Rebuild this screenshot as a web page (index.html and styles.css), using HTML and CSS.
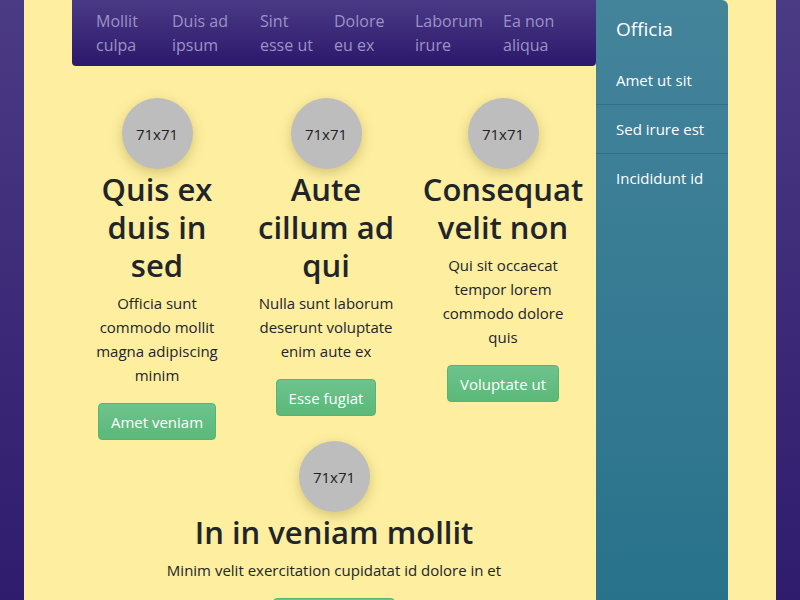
FILE: index.html
```html
<!DOCTYPE html>
<html lang="en">
<head>
<meta charset="utf-8">
<title>Page</title>
<link rel="stylesheet" href="styles.css">
</head>
<body>
<div class="page">
  <div class="main">
    <nav class="topnav">
      <a class="navlink">Mollit culpa</a>
      <a class="navlink">Duis ad ipsum</a>
      <a class="navlink">Sint esse ut</a>
      <a class="navlink">Dolore eu ex</a>
      <a class="navlink">Laborum irure</a>
      <a class="navlink">Ea non aliqua</a>
    </nav>
    <div class="features">
      <div class="feature">
        <div class="avatar">71x71</div>
        <h2 class="title">Quis ex duis in sed</h2>
        <p class="text">Officia sunt commodo mollit magna adipiscing minim</p>
        <button class="btn">Amet veniam</button>
      </div>
      <div class="feature">
        <div class="avatar">71x71</div>
        <h2 class="title">Aute cillum ad qui</h2>
        <p class="text">Nulla sunt laborum deserunt voluptate enim aute ex</p>
        <button class="btn">Esse fugiat</button>
      </div>
      <div class="feature narrow">
        <div class="avatar">71x71</div>
        <h2 class="title">Consequat velit non</h2>
        <p class="text">Qui sit occaecat tempor lorem commodo dolore quis</p>
        <button class="btn">Voluptate ut</button>
      </div>
      <div class="feature wide">
        <div class="avatar">71x71</div>
        <h2 class="title">In in veniam mollit</h2>
        <p class="text">Minim velit exercitation cupidatat id dolore in et</p>
        <button class="btn btn-cut">&nbsp;</button>
      </div>
    </div>
  </div>
  <aside class="sidebar">
    <h3 class="side-title">Officia</h3>
    <a class="side-link">Amet ut sit</a>
    <a class="side-link">Sed irure est</a>
    <a class="side-link">Incididunt id</a>
  </aside>
</div>
</body>
</html>
```

FILE: styles.css
```css
html, body {
  margin: 0;
  height: 100%;
}
body {
  background: linear-gradient(180deg, #4b3a84 0%, #2f1c6d 100%);
  font-family: "Open Sans", "Noto Sans", sans-serif;
  color: #212529;
  overflow: hidden;
}
.page {
  margin: 0 24px;
  min-height: 100%;
  background: #fdeea0;
  display: flex;
  padding: 0 48px;
  box-sizing: border-box;
}
.main {
  width: 524px;
  flex: none;
}
.topnav {
  display: grid;
  grid-template-columns: 76px 88px 74px 81px 88px auto;
  padding: 9px 0 9px 24px;
  background: linear-gradient(180deg, #4a3a85 0%, #2c186c 100%);
  border-radius: 0 0 4px 4px;
}
.navlink {
  color: #9d92c6;
  font-size: 16px;
  line-height: 24px;
  padding-right: 12px;
}
.features {
  display: grid;
  grid-template-columns: 170px 168px 186px;
  padding-top: 32px;
  row-gap: 1px;
}
.feature {
  display: flex;
  flex-direction: column;
  align-items: center;
  text-align: center;
  padding: 0 16px;
}
.feature.narrow {
  padding: 0 22px;
}
.feature.wide {
  grid-column: 1 / -1;
}
.avatar {
  width: 71px;
  height: 71px;
  border-radius: 50%;
  background: #bdbdbd;
  box-shadow: 0 4px 12px rgba(140, 120, 40, 0.35);
  display: flex;
  align-items: center;
  justify-content: center;
  font-size: 15px;
  color: #222;
}
.title {
  margin: 1px 0 7px;
  font-size: 31px;
  line-height: 38px;
  font-weight: 600;
}
.text {
  margin: 0 0 16px;
  font-size: 15px;
  line-height: 24px;
}
.btn {
  font-family: inherit;
  font-size: 15px;
  color: #fff;
  background: linear-gradient(180deg, #6dc38d 0%, #5bb978 100%);
  border: 1px solid #56b474;
  border-radius: 4px;
  padding: 0 12px;
  height: 37px;
}
.btn-cut {
  width: 122px;
}
.sidebar {
  width: 132px;
  flex: none;
  background: linear-gradient(180deg, #44849b 0%, #27718a 100%);
  border-radius: 0 6px 0 0;
  color: #fff;
}
.side-title {
  margin: 0;
  padding: 16px 20px 14px;
  font-size: 19px;
  line-height: 26px;
  font-weight: 400;
}
.side-link {
  display: block;
  padding: 12px 20px;
  font-size: 15px;
  line-height: 24px;
  border-top: 1px solid #326f86;
}
.side-link:first-of-type {
  border-top: none;
}
```
